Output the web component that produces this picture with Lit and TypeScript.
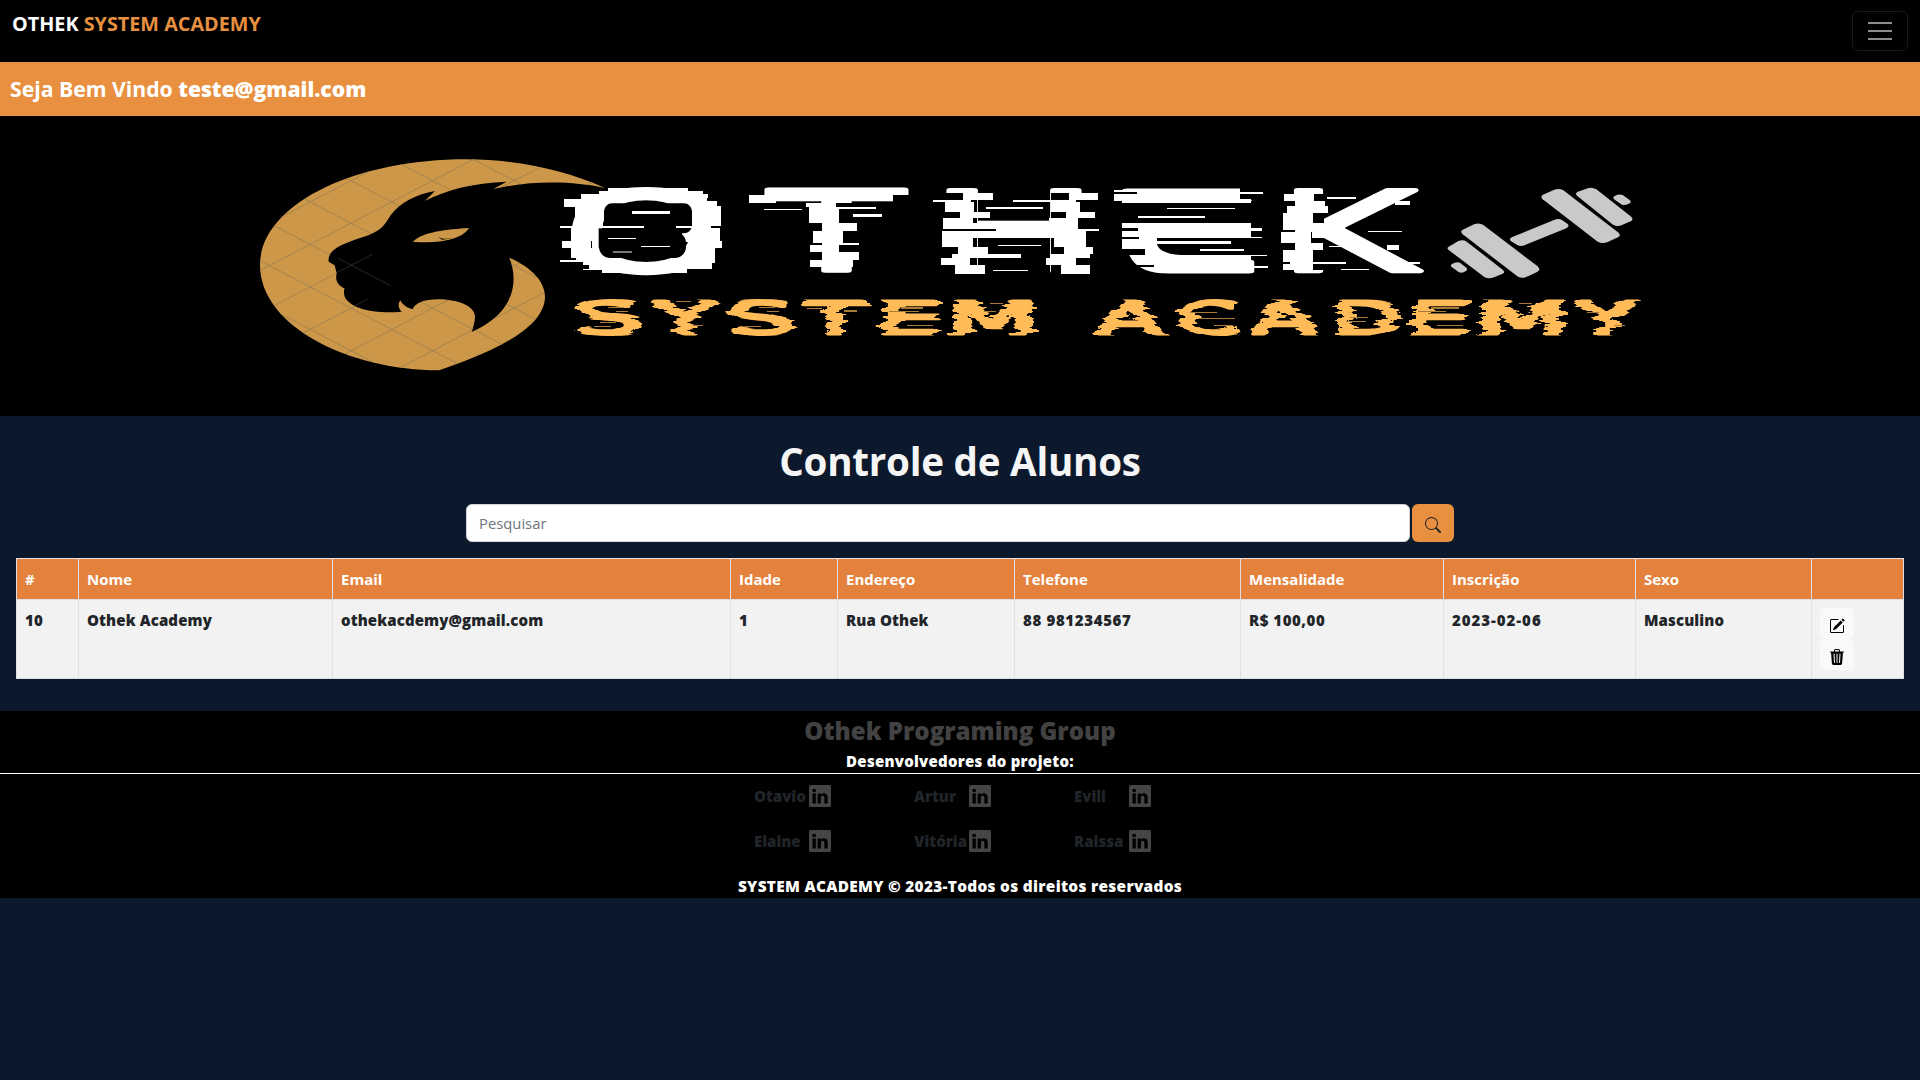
import { LitElement, html, svg, css } from "lit";
import { customElement } from "lit/decorators.js";

type Box = [number, number, number, number];

/* Horizontal metrics of DejaVu Sans capitals: [xMin, xMax] in 1/2048 em. */
const METRICS: Record<string, [number, number]> = {
  O: [115, 1497], T: [-6, 1257], H: [201, 1339], E: [201, 1145], K: [201, 1386],
  S: [135, 1186], Y: [-4, 1255], M: [201, 1567], A: [16, 1384], C: [115, 1319], D: [201, 1456],
};

/* One stretched capital whose painted box spans left..right. */
function letter(ch: string, left: number, right: number, base: number, size: number, stroke: number) {
  const [a, b] = METRICS[ch];
  const em = size / 2048;
  const s = (right - left) / ((b - a) * em + stroke);
  const x = -a * em + stroke / 2;
  return svg`<text class="glyph" transform=${`translate(${left} ${base}) scale(${s} 1)`} x=${x} y="0" font-size=${size} stroke-width=${stroke}>${ch}</text>`;
}

const boxes = (list: Box[], cls: string) =>
  list.map(([x, y, w, h]) => svg`<rect class=${cls} x=${x} y=${y} width=${w} height=${h}></rect>`);

/* A band [y0, y1, x0, x1] of a stem that is nominally n0..n1 wide. */
function bands(n0: number, n1: number, rows: Box[]) {
  return [
    ...rows.map(([y0, y1]) => svg`<rect class="cut" x=${n0 - 3} y=${y0} width=${n1 - n0 + 6} height=${y1 - y0}></rect>`),
    ...rows.map(([y0, y1, x0, x1]) => svg`<rect class="add" x=${x0} y=${y0} width=${x1 - x0} height=${y1 - y0}></rect>`),
  ];
}

const TITLE: [string, number, number][] = [
  ["O", 572, 720], ["T", 764.5, 908.5], ["H", 946.5, 1081.5], ["E", 1122, 1252], ["K", 1294, 1424],
];
const SUBTITLE: [string, number, number][] = [
  ["S", 580, 641], ["Y", 651, 719], ["S", 731, 792], ["T", 802, 866], ["E", 882, 937], ["M", 953, 1033],
  ["A", 1093, 1165], ["C", 1179, 1240], ["A", 1250, 1319], ["D", 1338, 1397], ["E", 1412, 1466],
  ["M", 1482, 1562], ["Y", 1574, 1641],
];

const O_CORNERS: Box[] = [
  [205, 85, 240, 14], [178, 92, 310, 14], [160, 101, 345, 14], [128, 108, 80, 26], [112, 124, 78, 30], [104, 138, 86, 60],
  [430, 112, 70, 20], [446, 124, 84, 18], [456, 138, 88, 60], [92, 205, 84, 60], [92, 260, 88, 34], [108, 290, 90, 14],
  [128, 302, 80, 12], [146, 312, 330, 14], [185, 322, 255, 16], [430, 290, 94, 18], [440, 262, 86, 32],
  [425, 205, 114, 40], [420, 304, 90, 16],
];
const O_ADD: Box[] = [
  [60, 197, 252, 8], [275, 153, 115, 8], [203, 233, 84, 4], [302, 257, 88, 5], [408, 197, 105, 8],
  [65, 242, 60, 22], [60, 299, 70, 7], [72, 118, 60, 22], [122, 102, 70, 16],
  [500, 242, 46, 22], [455, 306, 60, 22], [128, 326, 60, 5],
];
const O_CUT: Box[] = [[513, 197, 40, 8], [152, 242, 4, 22]];
const LINES_OT: Box[] = [[673, 147, 112, 4], [938, 162, 88, 8], [887, 140, 122, 7], [627, 104, 80, 25]];
const T_ROWS: Box[] = [
  [130, 140, 798, 887], [140, 147, 808, 1009], [147, 190, 808, 898], [190, 213, 845, 950], [213, 248, 820, 908],
  [248, 255, 845, 956], [255, 277, 810, 898], [277, 300, 845, 956], [300, 322, 810, 938],
];
const H_LEFT: Box[] = [
  [99, 119, 160, 248], [119, 125, 70, 182], [125, 155, 105, 193], [155, 174, 150, 240], [174, 188, 100, 188],
  [188, 206, 100, 230], [206, 213, 258, 300], [213, 233, 95, 230], [233, 262, 95, 190], [262, 282, 145, 233],
  [282, 294, 127, 333], [294, 314, 92, 180], [314, 341, 135, 224],
];
const H_RIGHT: Box[] = [
  [99, 119, 477, 565], [119, 125, 310, 498], [125, 155, 422, 510], [155, 174, 467, 555], [174, 188, 417, 505],
  [188, 206, 400, 505], [206, 213, 400, 568], [213, 233, 400, 527], [233, 262, 432, 527], [262, 282, 462, 550],
  [282, 294, 420, 540], [294, 314, 408, 497], [314, 341, 452, 540],
];
const H_ADD: Box[] = [[188, 188, 240, 18], [258, 206, 200, 7], [188, 213, 260, 20], [228, 141, 171, 5], [265, 254, 127, 4], [250, 329, 103, 4]];
const H_CUT: Box[] = [[95, 206, 163, 7]];
const E_CUT: Box[] = [[600, 129, 440, 59], [990, 85, 45, 11], [990, 102, 45, 19], [742, 234, 300, 51]];
const E_ADD: Box[] = [
  [612, 90, 100, 6], [612, 102, 100, 20], [990, 96, 68, 5], [652, 118, 372, 11], [770, 143, 204, 5], [684, 168, 200, 5],
  [690, 188, 333, 45], [652, 212, 40, 18], [1020, 205, 35, 7], [1020, 230, 37, 3], [652, 237, 50, 6], [740, 244, 223, 7],
  [870, 268, 133, 4], [700, 285, 323, 55], [1020, 285, 51, 3], [1020, 317, 55, 7], [652, 250, 50, 18],
];
const E_TRIM: Box[] = [[608, 97, 72, 5], [630, 205, 54, 7], [630, 232, 58, 4], [630, 268, 74, 16], [655, 316, 78, 4]];
const K_ROWS: Box[] = [
  [102, 123, 42, 132], [123, 137, 75, 165], [137, 158, 52, 173], [158, 210, 40, 128], [210, 216, 75, 128],
  [216, 250, 33, 122], [250, 270, 75, 160], [270, 305, 40, 130], [305, 312, 60, 227], [312, 331, 40, 130],
];
const K_ADD: Box[] = [
  [125, 188, 100, 45], [170, 112, 88, 4], [295, 212, 100, 5], [177, 257, 57, 4], [213, 326, 85, 4],
  [310, 102, 40, 21], [375, 124, 44, 11], [350, 255, 36, 15], [405, 306, 46, 6], [280, 270, 30, 5],
];

const PANTHER =
  "M1095 144C975 90 830 58 680 58C330 58 60 200 60 375C60 560 330 691 597 691C700 655 915 580 915 470C915 425 875 382 808 353" +
  "C830 405 840 512 695 576C700 560 705 545 705 530C705 497 650 478 595 478C550 478 525 490 518 508C500 503 485 492 481 481" +
  "C473 492 475 505 485 515C400 522 330 505 314 470C311 460 311 452 314 446C292 435 285 420 290 400L284 376L266 365" +
  "C262 330 300 313 385 286C430 268 436 250 452 226C480 188 530 162 585 153L555 182C620 150 700 128 800 125L760 147C880 120 1000 124 1095 144Z";

const GRID = Array.from({ length: 15 }, (_, k) => 122 + 127.5 * (k - 7));

const STREAKS: Box[] = [
  [608, 307, 15, 1], [616, 311, 12, 1], [600, 322, 16, 1], [594, 326, 17, 1], [676, 301, 15, 1], [692, 325, 11, 1],
  [759, 307, 16, 1], [767, 311, 12, 1], [745, 326, 16, 1], [807, 308, 15, 1], [844, 310, 13, 2], [901, 307, 22, 2],
  [889, 311, 30, 1], [907, 325, 26, 1], [990, 303, 13, 1], [984, 311, 12, 1], [1190, 312, 27, 1], [1200, 318, 35, 1],
  [1214, 325, 18, 1], [1350, 317, 18, 1], [1346, 321, 20, 1], [1431, 307, 28, 2], [1418, 311, 28, 1], [1437, 325, 26, 1],
  [1519, 303, 13, 1], [1587, 312, 12, 1], [1614, 325, 11, 1],
];

const ICON = {
  search: "M11.742 10.344a6.5 6.5 0 1 0-1.397 1.398h-.001c.03.04.062.078.098.115l3.85 3.85a1 1 0 0 0 1.415-1.414l-3.85-3.85a1.007 1.007 0 0 0-.115-.1zM12 6.5a5.5 5.5 0 1 1-11 0 5.5 5.5 0 0 1 11 0z",
  edit: "M15.502 1.94a.5.5 0 0 1 0 .706L14.459 3.69l-2-2L13.502.646a.5.5 0 0 1 .707 0l1.293 1.293zm-1.75 2.456-2-2L4.939 9.21a.5.5 0 0 0-.121.196l-.805 2.414a.25.25 0 0 0 .316.316l2.414-.805a.5.5 0 0 0 .196-.12l6.813-6.814zM1 13.5A1.5 1.5 0 0 0 2.5 15h11a1.5 1.5 0 0 0 1.5-1.5v-6a.5.5 0 0 0-1 0v6a.5.5 0 0 1-.5.5h-11a.5.5 0 0 1-.5-.5v-11a.5.5 0 0 1 .5-.5H9a.5.5 0 0 0 0-1H2.5A1.5 1.5 0 0 0 1 2.5v11z",
  trash: "M11 1.5v1h3.5a.5.5 0 0 1 0 1h-.538l-.853 10.66A2 2 0 0 1 11.115 16h-6.23a2 2 0 0 1-1.994-1.84L2.038 3.5H1.5a.5.5 0 0 1 0-1H5v-1A1.5 1.5 0 0 1 6.5 0h3A1.5 1.5 0 0 1 11 1.5Zm-5 0v1h4v-1a.5.5 0 0 0-.5-.5h-3a.5.5 0 0 0-.5.5ZM4.5 5.029l.5 8.5a.5.5 0 1 0 .998-.06l-.5-8.5a.5.5 0 1 0-.998.06Zm6.53-.528a.5.5 0 0 0-.528.47l-.5 8.5a.5.5 0 0 0 .998.058l.5-8.5a.5.5 0 0 0-.47-.528ZM8 4.5a.5.5 0 0 0-.5.5v8.5a.5.5 0 0 0 1 0V5a.5.5 0 0 0-.5-.5Z",
  linkedin: "M0 1.146C0 .513.526 0 1.175 0h13.65C15.474 0 16 .513 16 1.146v13.708c0 .633-.526 1.146-1.175 1.146H1.175C.526 16 0 15.487 0 14.854V1.146zm4.943 12.248V6.169H2.542v7.225h2.401zm-1.2-8.212c.837 0 1.358-.554 1.358-1.248-.015-.709-.52-1.248-1.342-1.248-.822 0-1.359.54-1.359 1.248 0 .694.521 1.248 1.327 1.248h.016zm4.908 8.212V9.359c0-.216.016-.432.08-.586.173-.431.568-.878 1.232-.878.869 0 1.216.662 1.216 1.634v3.865h2.401V9.25c0-2.22-1.184-3.252-2.764-3.252-1.274 0-1.845.7-2.165 1.193v.025h-.016a5.54 5.54 0 0 1 .016-.025V6.169h-2.4c.03.678 0 7.225 0 7.225h2.4z",
};

const icon = (d: string, size = 16) =>
  html`<svg width=${size} height=${size} viewBox="0 0 16 16" fill="currentColor"><path d=${d}></path></svg>`;

@customElement("academy-banner")
class AcademyBanner extends LitElement {
  static styles = css`
    :host { display: block; height: 300px; background: #000; }
    svg { display: block; }
    rect { shape-rendering: crispEdges; }
    .glyph { font-family: "DejaVu Sans", sans-serif; stroke-linejoin: round; }
    .title { fill: #fff; stroke: #fff; }
    .subtitle { fill: #ffbb58; stroke: #ffbb58; }
    .add { fill: #fff; }
    .dim { fill: #777; }
    .streak { fill: #a97b3a; }
    .cut { fill: #000; }
    .soft { shape-rendering: auto; }
    .gold { fill: #cc9748; }
    .mesh { stroke: #a5854f; stroke-width: 3; }
    .whisker { stroke: #3b3b3b; stroke-width: 2; }
    .metal { fill: #c9c9c9; }
  `;
  render() {
    return html`<svg width="1920" height="300" viewBox="0 116 1920 300" role="img" aria-label="Othek System Academy">
      <defs>
        <clipPath id="head"><path d=${PANTHER}></path></clipPath>
        <filter id="tear" filterUnits="userSpaceOnUse" x="560" y="290" width="1100" height="55" color-interpolation-filters="sRGB">
          <feTurbulence type="fractalNoise" baseFrequency="0.006 0.21" numOctaves="2" seed="11" result="n"></feTurbulence>
          <feColorMatrix in="n" values="2.4 0 0 0 -0.7  0 0 0 0 0.5  0 0 0 0 0.5  0 0 0 0 1" result="m"></feColorMatrix>
          <feComponentTransfer in="m" result="q"><feFuncR type="discrete" tableValues="0.1 0.25 0.4 0.5 0.6 0.75 0.9"></feFuncR></feComponentTransfer>
          <feDisplacementMap in="SourceGraphic" in2="q" scale="14" xChannelSelector="R" yChannelSelector="G"></feDisplacementMap>
        </filter>
      </defs>
      <g transform="translate(240 140) scale(.33333)">
        <path class="gold" d=${PANTHER}></path>
        <path class="gold" d="M518 305C550 275 620 268 687 264C665 300 590 312 518 305Z"></path>
        <g clip-path="url(#head)">
          ${GRID.map((y) => svg`<path class="mesh" d=${`M-157 ${y - 255}L1313 ${y + 510}M-157 ${y + 255}L1313 ${y - 510}`}></path>`)}
        </g>
        <path class="cut" d="M594 291C606 298 622 297 640 295L606 299Z"></path>
        <path class="whisker" d="M292 354L452 437M296 395L397 343M342 499L383 477"></path>
      </g>
      <g class="title">${TITLE.map(([c, l, r]) => letter(c, l, r, 271.2, 110.5, 4.4))}</g>
      <g transform="translate(540 160) scale(.33333)">
        ${boxes(O_CORNERS, "add")}
        <rect class="cut soft" x="192" y="130" width="264" height="90" rx="24"></rect>
        <rect class="cut soft" x="176" y="205" width="248" height="58"></rect>
        <rect class="cut soft" x="177" y="215" width="261" height="79" rx="34"></rect>
        ${boxes(O_ADD, "add")}${boxes(O_CUT, "cut")}${boxes([[218, 274, 57, 4]], "dim")}
        ${bands(845, 933, T_ROWS)}${boxes(LINES_OT, "add")}${boxes([[1058, 105, 52, 26]], "cut")}
      </g>
      <g transform="translate(910 160) scale(.33333)">
        ${bands(110, 198, H_LEFT)}${bands(425, 514, H_RIGHT)}${boxes(H_ADD, "add")}${boxes(H_CUT, "cut")}
        ${boxes(E_CUT, "cut")}${boxes(E_ADD, "add")}
        <path class="cut" d="M630 268H652C665 318 705 340 780 342H630Z"></path>
        <path class="add" d="M740 250C745 275 780 286 830 286H700Z"></path>
        ${boxes(E_TRIM, "cut")}
      </g>
      <g transform="translate(1270 160) scale(.33333)">
        ${bands(72, 160, K_ROWS)}${boxes(K_ADD, "add")}
        <path class="metal" d="M577 210L612 193Q628 187 640 195L802 318Q814 329 801 336L774 349Q757 357 744 350L578 223Q570 215 577 210Z"></path>
        <path class="metal" d="M536 260L564 244Q578 237 590 245L698 329Q707 337 698 341L672 352Q657 358 643 351L536 270Q529 264 536 260Z"></path>
        <path class="metal" d="M545 313Q558 304 570 308L589 323Q594 328 589 332Q577 341 567 337L546 322Q540 317 545 313Z"></path>
        <path class="metal" d="M725 232L852 180Q866 174 876 180L893 192Q900 199 889 205L765 255Q752 261 742 255L722 243Q717 236 725 232Z"></path>
        <path class="metal" d="M819 104L851 90Q867 83 880 91L1044 217Q1055 227 1044 232L1013 246Q998 252 983 245L818 118Q810 109 819 104Z"></path>
        <path class="metal" d="M922 96L949 86Q965 80 979 88L1082 169Q1093 178 1082 184L1056 195Q1043 201 1029 194L922 108Q914 101 922 96Z"></path>
        <path class="metal" d="M1034 108Q1047 101 1058 105L1080 121Q1085 127 1079 130Q1067 138 1056 134L1034 119Q1026 113 1034 108Z"></path>
      </g>
      <g class="subtitle" filter="url(#tear)">${SUBTITLE.map(([c, l, r]) => letter(c, l, r, 333.6, 44.2, 3.2))}</g>
      ${boxes(STREAKS, "streak")}
    </svg>`;
  }
}

@customElement("app-root")
class AppRoot extends LitElement {
  static styles = css`
    * { box-sizing: border-box; }
    :host {
      display: flex; flex-direction: column; height: 1080px; overflow: hidden; background: #0c182b;
      font-family: "Open Sans", "Noto Sans", sans-serif; font-size: 15px; line-height: 24px; color: #212529;
    }
    svg { display: block; }
    .nav { height: 62px; flex: none; background: #000; display: flex; justify-content: space-between; align-items: flex-start; padding: 11px 12px 0; }
    .brand { color: #fff; font-size: 19.8px; font-weight: 700; line-height: 26px; }
    .brand span { color: #e8903f; }
    .toggler { width: 56px; height: 40px; border: 1px solid #1a1a1a; border-radius: 6px; background: none; padding: 0; display: flex; flex-direction: column; align-items: center; justify-content: center; gap: 6px; }
    .toggler i { width: 24px; height: 2px; background: #8c8c8c; }
    .welcome { height: 54px; flex: none; background: #e8903f; color: #fff; padding: 13px 10px 0; font-size: 21.2px; line-height: 28px; font-weight: 700; }
    .welcome b { font-size: 21.1px; font-weight: 800; }
    academy-banner { flex: none; }
    .heading { margin: 22px 0 0; height: 50px; text-align: center; color: #f5f5f5; font-size: 38.6px; line-height: 46px; font-weight: 700; letter-spacing: -0.25px; }
    .search { margin-top: 16px; display: flex; justify-content: center; gap: 2px; height: 38px; }
    .field { width: 944px; border: 1px solid #ced4da; border-radius: 6px; padding: 0 12px; background: #fff; font: 400 14.8px/36px "Open Sans", sans-serif; outline: none; }
    .field::placeholder { color: #6c757d; opacity: 1; }
    .go { width: 42px; border: 0; border-radius: 6px; background: #e8903f; color: #212529; padding: 4px 0 0 13px; }
    .table { margin: 16px 16px 0; display: grid; grid-template-columns: 62px 254px 398px 107px 177px 226px 203px 192px 176px 92px; grid-template-rows: 41px 79px; border: solid #dee2e6; border-width: 1px 0 0 1px; font-weight: 800; }
    .cell { border: solid #dee2e6; border-width: 0 1px 1px 0; padding: 8px 8px 0; background: #f2f2f2; white-space: nowrap; letter-spacing: 0.12px; }
    .head { background: #e4813d; color: #fff; font-weight: 700; letter-spacing: 0; }
    .phone { letter-spacing: 0.66px; }
    .price { letter-spacing: 0.55px; }
    .date { letter-spacing: 0.98px; }
    .act { display: flex; width: 34px; height: 31px; border: 0; border-radius: 5px; background: #f8f9fa; color: #000; padding: 10px 0 0 9px; }
    .footer { margin-top: 32px; height: 187px; flex: none; background: #000; display: flex; flex-direction: column; align-items: center; font-weight: 800; }
    .group { margin-top: 6px; font-size: 24.1px; line-height: 28px; color: #424242; }
    .devs { margin-top: 5px; height: 24px; align-self: stretch; text-align: center; color: #fff; border-bottom: 1px solid #fff; line-height: 23px; letter-spacing: 0.26px; }
    .people { margin-top: 11px; margin-left: 75px; width: 487px; display: grid; grid-template-columns: repeat(3, 160px); row-gap: 22px; }
    .person { display: flex; color: #212529; height: 23px; line-height: 23px; }
    .person span { width: 55px; flex: none; white-space: nowrap; }
    .person svg { color: #454545; flex: none; }
    .rights { margin-top: 22px; color: #fff; font-size: 15.4px; letter-spacing: 0.3px; }
  `;
  private heads = ["#", "Nome", "Email", "Idade", "Endereço", "Telefone", "Mensalidade", "Inscrição", "Sexo", ""];
  private row = [
    ["10", ""], ["Othek Academy", ""], ["othekacdemy@gmail.com", ""], ["1", ""], ["Rua Othek", ""],
    ["88 981234567", "phone"], ["R$ 100,00", "price"], ["2023-02-06", "date"], ["Masculino", ""],
  ];
  private people = ["Otavio", "Artur", "Evili", "Elaine", "Vitória", "Raissa"];
  render() {
    return html`
      <nav class="nav">
        <div class="brand">OTHEK <span>SYSTEM ACADEMY</span></div>
        <button class="toggler" aria-label="Menu"><i></i><i></i><i></i></button>
      </nav>
      <div class="welcome">Seja Bem Vindo <b>teste@gmail.com</b></div>
      <academy-banner></academy-banner>
      <h1 class="heading">Controle de Alunos</h1>
      <div class="search">
        <input class="field" placeholder="Pesquisar" />
        <button class="go">${icon(ICON.search)}</button>
      </div>
      <div class="table">
        ${this.heads.map((h) => html`<div class="cell head">${h}</div>`)}
        ${this.row.map(([text, kind]) => html`<div class="cell ${kind}">${text}</div>`)}
        <div class="cell">
          <button class="act">${icon(ICON.edit)}</button>
          <button class="act">${icon(ICON.trash)}</button>
        </div>
      </div>
      <footer class="footer">
        <div class="group">Othek Programing Group</div>
        <div class="devs">Desenvolvedores do projeto:</div>
        <div class="people">
          ${this.people.map((p) => html`<div class="person"><span>${p}</span>${icon(ICON.linkedin, 22)}</div>`)}
        </div>
        <div class="rights">SYSTEM ACADEMY © 2023-Todos os direitos reservados</div>
      </footer>
    `;
  }
}
